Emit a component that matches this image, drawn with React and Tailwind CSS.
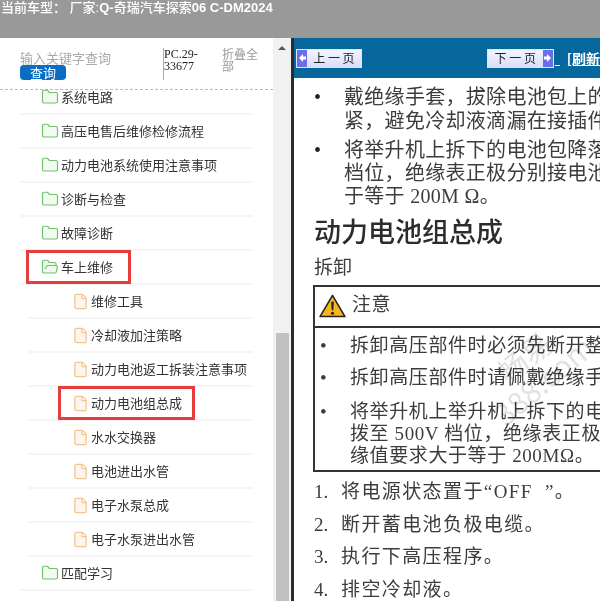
import React from 'react';
import { Folder, FolderOpen, File } from 'lucide-react';

const rows = [
  { level: 1, name: '系统电路' },
  { level: 1, name: '高压电售后维修检修流程' },
  { level: 1, name: '动力电池系统使用注意事项' },
  { level: 1, name: '诊断与检查' },
  { level: 1, name: '故障诊断' },
  { level: 1, name: '车上维修', open: true, mark: 'w-[105px]' },
  { level: 2, name: '维修工具' },
  { level: 2, name: '冷却液加注策略' },
  { level: 2, name: '动力电池返工拆装注意事项' },
  { level: 2, name: '动力电池组总成', mark: 'w-[137px]' },
  { level: 2, name: '水水交换器' },
  { level: 2, name: '电池进出水管' },
  { level: 2, name: '电子水泵总成' },
  { level: 2, name: '电子水泵进出水管' },
  { level: 1, name: '匹配学习' },
];

const TreeRow = ({ row }) => {
  const isTop = row.level === 1;
  return (
    <div className={`relative flex h-[34px] items-center border-b-2 border-[#f5f5f5] ${isTop ? 'ml-[20px] pl-[21px]' : 'ml-[28px] pl-[44px]'}`}>
      {row.open ? (
        <FolderOpen size={18} strokeWidth={1.6} className="shrink-0 fill-[#eef8ec] text-[#72c06c]" />
      ) : isTop ? (
        <Folder size={18} strokeWidth={1.6} className="shrink-0 fill-[#f3faf2] text-[#72c06c]" />
      ) : (
        <File size={17} strokeWidth={1.8} className="shrink-0 fill-[#fdf6ee] text-[#f2c595]" />
      )}
      <span className="ml-[2px] whitespace-nowrap text-[13px] text-[#333]">{row.name}</span>
      {row.mark && (
        <div className={`absolute top-[-1px] h-[34px] border-[3px] border-[#e63c3c] ${isTop ? 'left-[6px]' : 'left-[30px]'} ${row.mark}`} />
      )}
    </div>
  );
};

const Sidebar = () => (
  <aside className="flex w-[273px] shrink-0 flex-col overflow-hidden bg-white">
    <div className="flex h-[52px] shrink-0 border-b border-dashed border-[#bbb] pl-[20px] pt-[10px]">
      <div className="w-[143px]">
        <div className="mt-[2px] text-[13px] leading-[16px] text-[#aaa]">输入关键字查询</div>
        <div className="mt-[-1px] flex h-[15px] w-[46px] items-center justify-center rounded-[4px] bg-[#0b6cc4] text-[13px] text-white">查询</div>
      </div>
      <div className="h-[32px] w-[59px] border-l border-[#aaa] font-['Liberation_Serif'] text-[12px] leading-[12px] text-[#222]">PC.29-<br />33677</div>
      <div className="w-[38px] text-[12px] leading-[12px] text-[#999]">折叠全部</div>
    </div>
    <div className="mt-[-9px] pr-[20px]">
      {rows.map((row) => <TreeRow key={row.name} row={row} />)}
    </div>
  </aside>
);

const PageButton = ({ next, children }) => (
  <div className={`flex h-[19px] w-[67px] items-center border border-[#dfe3fb] bg-gradient-to-b from-[#f4f5ff] to-[#d9ddf8] ${next ? 'flex-row-reverse' : ''}`}>
    <div className="flex h-full w-[10px] shrink-0 items-center justify-center bg-[#6a6ee8]">
      <svg width="7" height="8" viewBox="0 0 7 8" fill="#fff">
        <path d={next ? 'M0 2.5h3V0l4 4-4 4V5.5H0z' : 'M7 2.5H4V0L0 4l4 4V5.5h3z'} />
      </svg>
    </div>
    <span className="flex-1 text-center text-[12px] leading-none text-[#222]">{children}</span>
  </div>
);

const Bullet = ({ className, children }) => (
  <div className={`flex whitespace-nowrap tracking-[0.3px] ${className}`}>
    <span className="w-[31px] shrink-0 pl-[1px] text-[#222]">•</span>
    <div>{children}</div>
  </div>
);

const Warning = () => (
  <svg width="27" height="24" viewBox="0 0 28 25" className="shrink-0">
    <path d="M14 1.5 L27 23.5 H1 Z" fill="#f5b51e" stroke="#222" strokeWidth="1.6" strokeLinejoin="round" />
    <path d="M12.6 8 h2.8 l-.6 9 h-1.6 Z" fill="#222" />
    <circle cx="14" cy="20" r="1.6" fill="#222" />
  </svg>
);

const Step = ({ num, children }) => (
  <div className="flex">
    <span className="w-[27px] shrink-0">{num}.</span>
    <span className="tracking-[1.4px]">{children}</span>
  </div>
);

const Content = () => (
  <main className="relative min-w-0 flex-1 overflow-hidden bg-white text-[#3c3c3c]">
    <div className="flex h-[40px] items-center bg-[#05679c] pl-[2px]">
      <PageButton>上 一 页</PageButton>
      <div className="ml-[125px]"><PageButton next>下 一 页</PageButton></div>
      <span className="ml-[1px] w-[5px] border-b border-white self-end mb-[12px]" />
      <span className="ml-[7px] whitespace-nowrap text-[14px] font-bold text-white underline">[刷新</span>
    </div>
    <div className="pl-[19px] font-['Liberation_Serif','Noto_Sans_CJK_SC',serif]">
      <Bullet className="mt-[7px] text-[20px] leading-[24px]">
        <div>戴绝缘手套，拔除电池包上的冷却液管路</div>
        <div>紧，避免冷却液滴漏在接插件上</div>
      </Bullet>
      <Bullet className="mt-[6px] text-[20px] leading-[23px]">
        <div>将举升机上拆下的电池包降落至地面</div>
        <div>档位，绝缘表正极分别接电池包总正</div>
        <div>于等于 200M Ω。</div>
      </Bullet>
      <h2 className="mt-[7px] pl-[1px] text-[27px] font-medium leading-[36px] text-[#2c2c2c]">动力电池组总成</h2>
      <p className="mt-[4px] pl-[1px] text-[19px] leading-[26px]">拆卸</p>
      <div className="mt-[4px] w-[320px] border-2 border-[#333] whitespace-nowrap">
        <div className="flex h-[41px] items-center gap-[6px] border-b-2 border-[#333] pb-[2px] pl-[4px] text-[19px] tracking-[0.4px]">
          <Warning />
          <span>注意</span>
        </div>
        <div className="pb-[3px] pl-[5px] text-[19px] tracking-[0.6px]">
          <div className="flex h-[34px] items-center pt-[2px]"><span className="w-[30px] shrink-0">•</span>拆卸高压部件时必须先断开整车高压</div>
          <div className="flex h-[32px] items-center"><span className="w-[30px] shrink-0">•</span>拆卸高压部件时请佩戴绝缘手套</div>
          <div className="flex pt-[7px] leading-[22px]">
            <span className="w-[30px] shrink-0">•</span>
            <div>
              <div>将举升机上举升机上拆下的电池包</div>
              <div>拨至 500V 档位，绝缘表正极分别接</div>
              <div>缘值要求大于等于 200MΩ。</div>
            </div>
          </div>
        </div>
      </div>
      <div className="mt-[4px] whitespace-nowrap pl-[1px] text-[19px] leading-[32.5px]">
        <Step num="1">将电源状态置于“OFF&nbsp;&nbsp;”。</Step>
        <Step num="2">断开蓄电池负极电缆。</Step>
        <Step num="3">执行下高压程序。</Step>
        <Step num="4">排空冷却液。</Step>
      </div>
    </div>
    {/* watermark over the page image */}
    <div className="absolute left-[180px] top-[300px] rotate-[-40deg] whitespace-nowrap text-center text-[30px] leading-[30px] text-[#e2e2e2] mix-blend-multiply font-['Noto_Sans_CJK_SC',sans-serif]">
      <div>畅易</div>
      <div>388.com</div>
    </div>
  </main>
);

const App = () => (
  <div className="flex h-[601px] w-[600px] flex-col overflow-hidden bg-white font-['Noto_Sans_CJK_SC','Liberation_Sans',sans-serif]">
    <header className="h-[38px] shrink-0 whitespace-nowrap bg-[#999] pl-[1px] font-['Liberation_Sans','Noto_Sans_CJK_SC',sans-serif] text-[13px] font-medium leading-[15px] text-white">
      当前车型：&nbsp;厂家:<b>Q-</b>奇瑞汽车探索<b>06 C-DM2024</b>
    </header>
    <div className="flex min-h-0 flex-1">
      <Sidebar />
      <div className="relative flex w-[18px] shrink-0 flex-col items-center bg-[#f1f1f1]">
        <div className="mt-[8px] h-0 w-0 border-x-[4px] border-b-[4px] border-x-transparent border-b-[#555]" />
        <div className="mt-[283px] w-[13px] flex-1 bg-[#c1c1c1]" />
      </div>
      <div className="w-[3px] shrink-0 bg-[#2b2b2b]" />
      <Content />
    </div>
  </div>
);

export default App;
